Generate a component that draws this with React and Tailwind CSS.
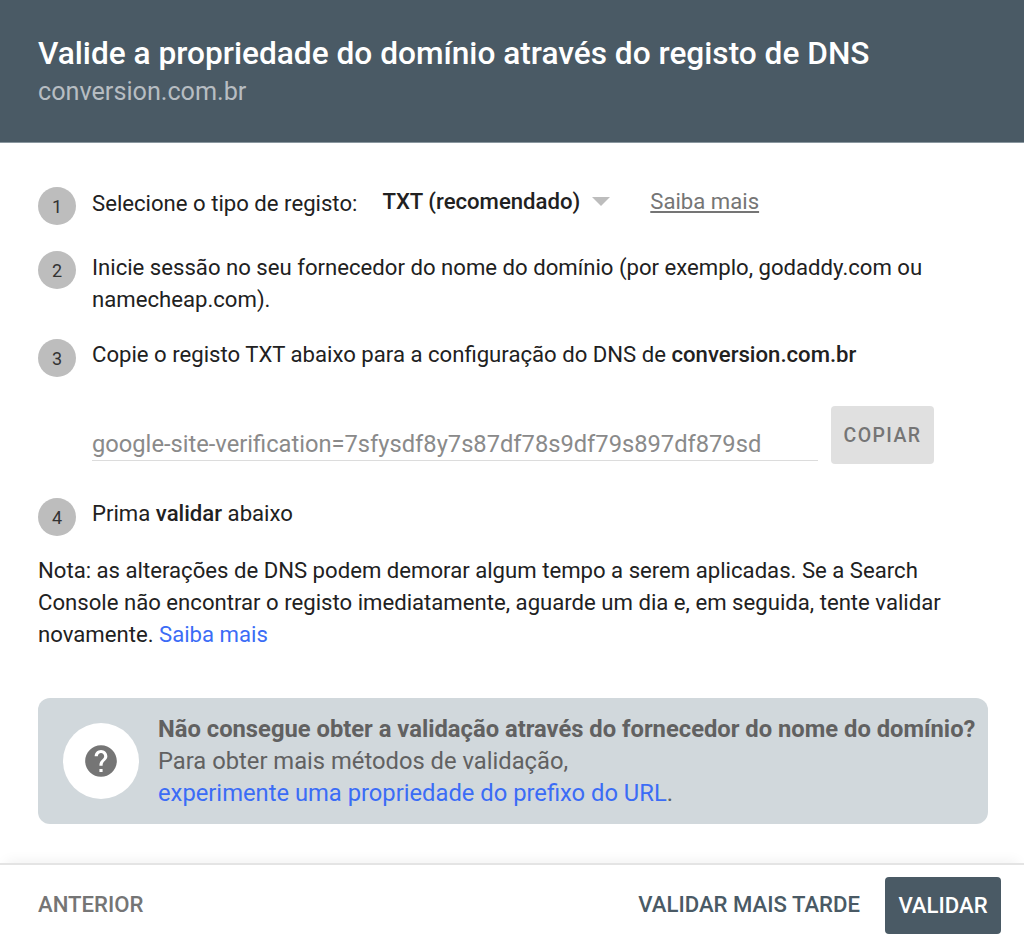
import React from 'react';

function Step({ n, className = '', children }) {
    return (
        <div className={`flex items-start ${className}`}>
            <div className="w-[38px] h-[38px] rounded-full bg-[#bdbdbd] flex items-center justify-center text-[18px] text-[#333] shrink-0 pt-[1px]">{n}</div>
            <div className="ml-[16px] flex-1">{children}</div>
        </div>
    );
}

export default function App() {
    return (
        <div className="w-[1024px] h-[951px] bg-white flex flex-col overflow-hidden font-['Roboto',sans-serif] text-[22.15px] leading-[32px] text-[#212121]">
            {/* cabecalho */}
            <div className="h-[143px] shrink-0 bg-[#4a5a65] border-b border-[#8a979f] px-[38px] pt-[36px]">
                <h1 className="text-[31.65px] leading-[36px] font-medium text-white">Valide a propriedade do domínio através do registo de DNS</h1>
                <p className="text-[25.2px] leading-[32px] text-[#b7bdc2] mt-[4px]">conversion.com.br</p>
            </div>

            {/* conteudo */}
            <div className="flex-1 px-[38px] pt-[44px]">
                <Step n="1">
                    <div className="flex items-center h-[32px]">
                        <span>Selecione o tipo de registo:</span>
                        <span className="ml-[25px] mb-[4px] font-medium">TXT (recomendado)</span>
                        <span className="ml-[12px] mb-[4px] w-0 h-0 border-l-[9px] border-r-[9px] border-t-[9px] border-l-transparent border-r-transparent border-t-[#bdbdbd]"></span>
                        <a className="ml-[40px] mb-[4px] text-[#757575] underline">Saiba mais</a>
                    </div>
                </Step>
                <Step n="2" className="mt-[26px]">
                    <p>Inicie sessão no seu fornecedor do nome do domínio (por exemplo, godaddy.com ou namecheap.com).</p>
                </Step>
                <Step n="3" className="mt-[24px]">
                    <p className="mt-[-1px]">Copie o registo TXT abaixo para a configuração do DNS de <span className="font-medium">conversion.com.br</span></p>
                </Step>

                <div className="flex items-end ml-[54px] mt-[29px]">
                    <div className="w-[726px] h-[39px] border-b border-[#dcdcdc] text-[#8a8a8a] text-[23.7px] leading-[44px]">google-site-verification=7sfysdf8y7s87df78s9df79s897df879sd</div>
                    <button className="ml-[13px] w-[103px] h-[58px] mb-[-3px] pt-[1px] bg-[#e0e0e0] rounded-[4px] text-[#757575] text-[19.5px] font-medium tracking-[1.4px]">COPIAR</button>
                </div>

                <Step n="4" className="mt-[37px]">
                    <p className="mt-[-1px]">Prima <span className="font-medium">validar</span> abaixo</p>
                </Step>

                <p className="mt-[18px]">Nota: as alterações de DNS podem demorar algum tempo a serem aplicadas. Se a Search Console não encontrar o registo imediatamente, aguarde um dia e, em seguida, tente validar novamente. <a className="text-[#3b6cf6]">Saiba mais</a></p>

                {/* ajuda */}
                <div className="mt-[48px] h-[126px] mr-[-2px] bg-[#d1d8dc] rounded-[12px] flex items-center pl-[25px] text-[23.75px]">
                    <div className="w-[76px] h-[76px] rounded-full bg-white flex items-center justify-center shrink-0">
                        <svg width="38" height="38" viewBox="0 0 24 24" fill="#757575">
                            <path d="M12 2C6.48 2 2 6.48 2 12s4.48 10 10 10 10-4.48 10-10S17.52 2 12 2zm1 17h-2v-2h2v2zm2.07-7.75l-.9.92C13.45 12.9 13 13.5 13 15h-2v-.5c0-1.1.45-2.1 1.17-2.83l1.24-1.26c.37-.36.59-.86.59-1.41 0-1.1-.9-2-2-2s-2 .9-2 2H8c0-2.21 1.79-4 4-4s4 1.79 4 4c0 .88-.36 1.68-.93 2.25z" />
                        </svg>
                    </div>
                    <div className="ml-[19px] text-[#616161] whitespace-nowrap">
                        <p className="font-bold">Não consegue obter a validação através do fornecedor do nome do domínio?</p>
                        <p>Para obter mais métodos de validação,</p>
                        <p><a className="text-[#3b6cf6]">experimente uma propriedade do prefixo do URL</a>.</p>
                    </div>
                </div>
            </div>

            {/* rodape */}
            <div className="h-[88px] shrink-0 border-t-2 border-[#e4e4e4] shadow-[0_-8px_12px_-6px_rgba(0,0,0,0.06)] flex items-center pl-[38px] pr-[23px] pb-[6px] font-medium">
                <button className="mb-[2px] text-[#757575]">ANTERIOR</button>
                <button className="ml-auto mb-[2px] text-[#4a5a65]">VALIDAR MAIS TARDE</button>
                <button className="ml-[25px] w-[116px] h-[57px] pb-[1px] bg-[#4a5a65] rounded-[4px] text-white">VALIDAR</button>
            </div>
        </div>
    );
}
